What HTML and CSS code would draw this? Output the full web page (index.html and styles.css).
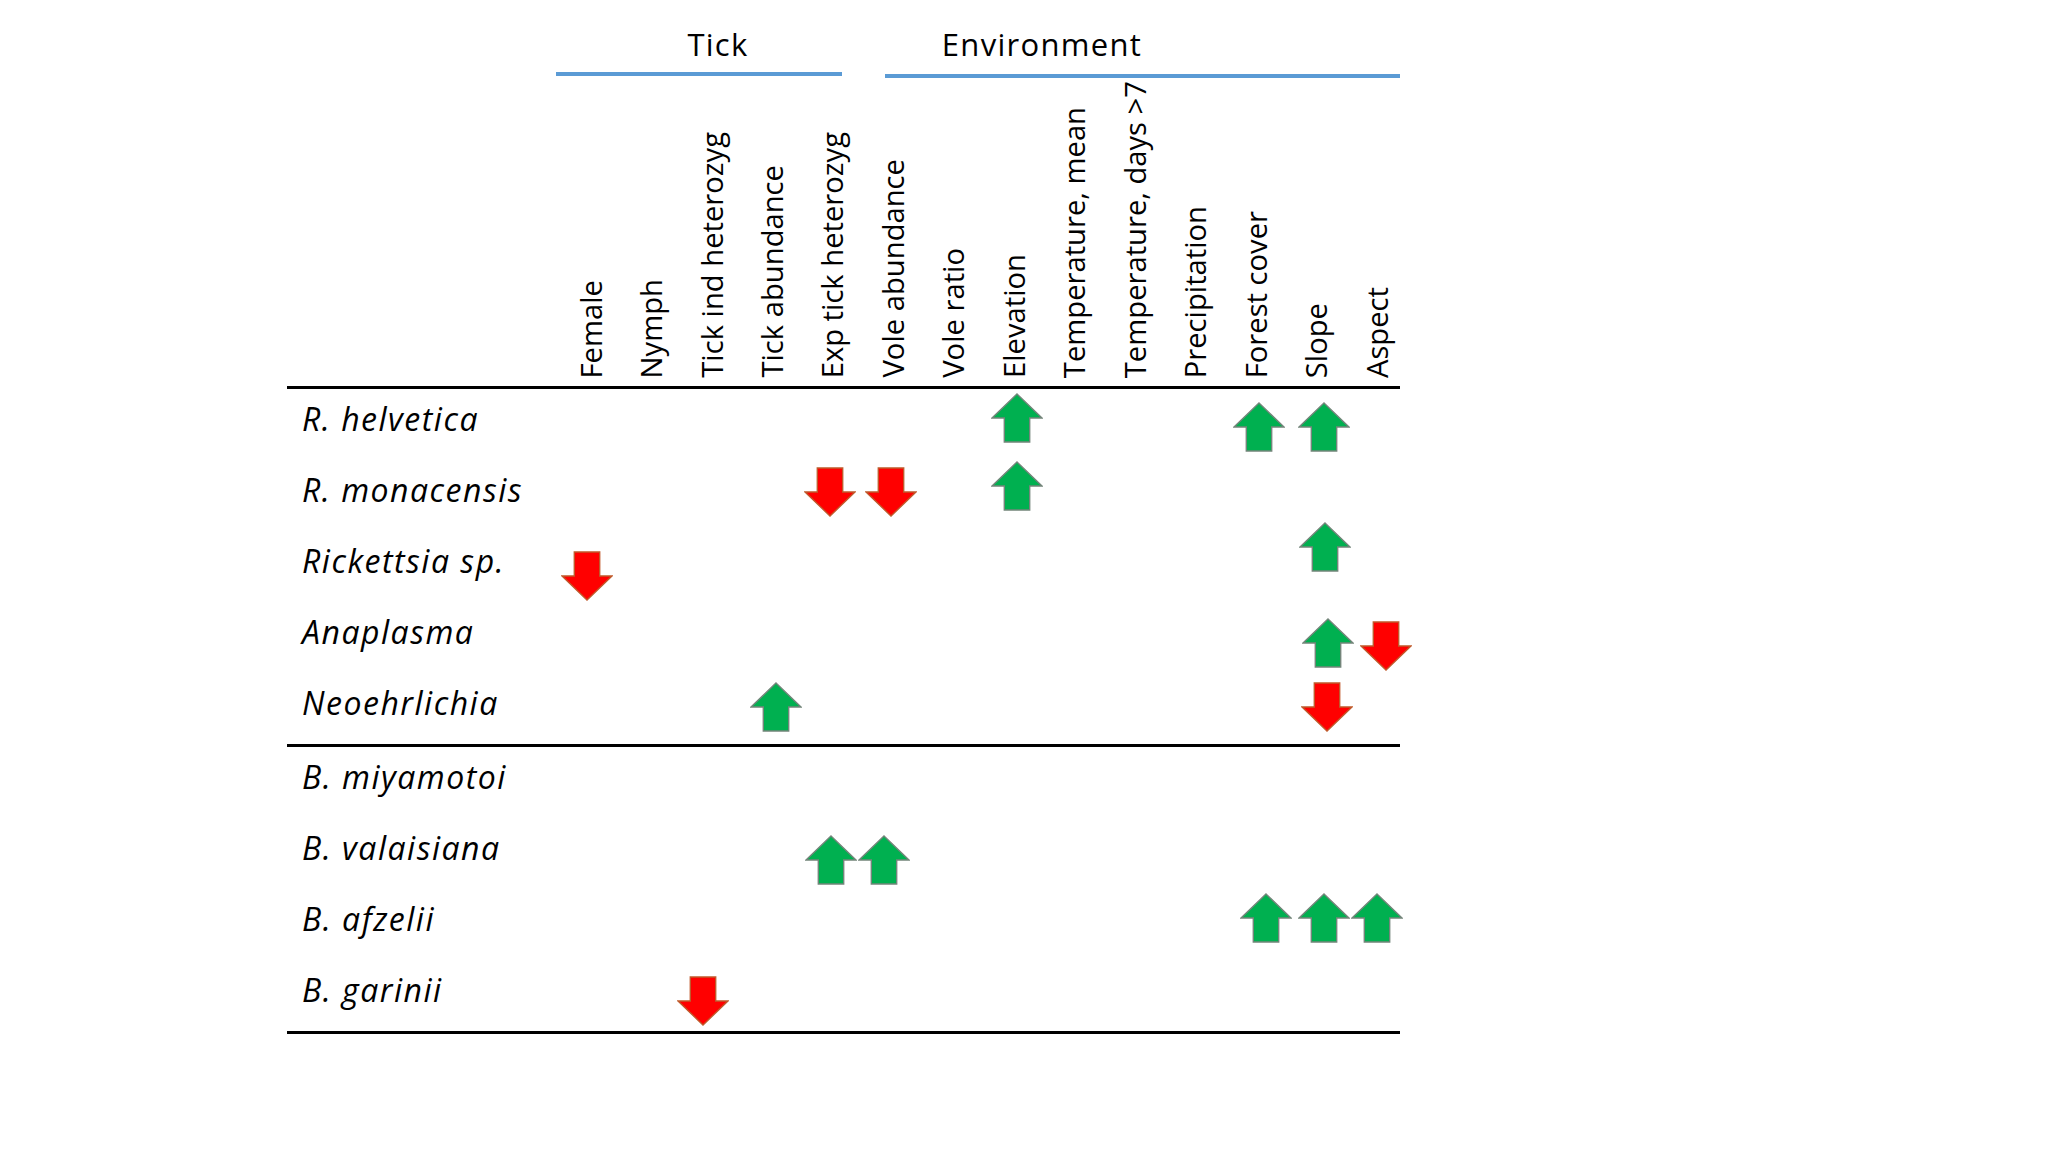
FILE: index.html
```html
<!DOCTYPE html>
<html lang="en">
<head>
<meta charset="utf-8">
<title>Tick and environment associations</title>
<link rel="stylesheet" href="styles.css">
</head>
<body>
<svg class="defs" width="0" height="0" aria-hidden="true">
  <defs>
    <symbol id="arrow-up" viewBox="0 0 52 50">
      <polygon points="26,1 51,25 38.7,25 38.7,49 13.3,49 13.3,25 1,25"/>
    </symbol>
    <symbol id="arrow-down" viewBox="0 0 52 50">
      <polygon points="13.3,1 38.7,1 38.7,25 51,25 26,49 1,25 13.3,25"/>
    </symbol>
  </defs>
</svg>
<div class="slide">
  <div class="table">
    <div class="groups">
      <div class="group group-tick">
        <div class="group-title">Tick</div>
        <div class="group-rule"></div>
      </div>
      <div class="group group-env">
        <div class="group-title">Environment</div>
        <div class="group-rule"></div>
      </div>
    </div>

    <div class="heads">
      <div class="head-spacer"></div>
      <div class="head"><span>Female</span></div>
      <div class="head"><span>Nymph</span></div>
      <div class="head"><span>Tick ind heterozyg</span></div>
      <div class="head"><span>Tick abundance</span></div>
      <div class="head"><span>Exp tick heterozyg</span></div>
      <div class="head"><span>Vole abundance</span></div>
      <div class="head"><span>Vole ratio</span></div>
      <div class="head"><span>Elevation</span></div>
      <div class="head"><span>Temperature, mean</span></div>
      <div class="head"><span>Temperature, days &gt;7</span></div>
      <div class="head"><span>Precipitation</span></div>
      <div class="head"><span>Forest cover</span></div>
      <div class="head"><span>Slope</span></div>
      <div class="head"><span>Aspect</span></div>
    </div>

    <div class="section">
      <div class="row">
        <div class="label">R. helvetica</div>
        <svg class="arrow up" style="grid-column:9; --dx:3px; --dy:-5px"><use href="#arrow-up"/></svg>
        <svg class="arrow up" style="grid-column:13; --dx:3px; --dy:4px"><use href="#arrow-up"/></svg>
        <svg class="arrow up" style="grid-column:14; --dx:7px; --dy:4px"><use href="#arrow-up"/></svg>
      </div>
      <div class="row">
        <div class="label">R. monacensis</div>
        <svg class="arrow down" style="grid-column:6; --dx:-3px; --dy:-2px"><use href="#arrow-down"/></svg>
        <svg class="arrow down" style="grid-column:7; --dx:-2px; --dy:-2px"><use href="#arrow-down"/></svg>
        <svg class="arrow up" style="grid-column:9; --dx:3px; --dy:-8px"><use href="#arrow-up"/></svg>
      </div>
      <div class="row">
        <div class="label">Rickettsia sp.</div>
        <svg class="arrow down" style="grid-column:2; --dx:-4px; --dy:11px"><use href="#arrow-down"/></svg>
        <svg class="arrow up" style="grid-column:14; --dx:8px; --dy:-18px"><use href="#arrow-up"/></svg>
      </div>
      <div class="row">
        <div class="label">Anaplasma</div>
        <svg class="arrow up" style="grid-column:14; --dx:11px; --dy:7px"><use href="#arrow-up"/></svg>
        <svg class="arrow down" style="grid-column:15; --dx:9px; --dy:10px"><use href="#arrow-down"/></svg>
      </div>
      <div class="row">
        <div class="label">Neoehrlichia</div>
        <svg class="arrow up" style="grid-column:5; --dx:3px; --dy:0px"><use href="#arrow-up"/></svg>
        <svg class="arrow down" style="grid-column:14; --dx:10px; --dy:0px"><use href="#arrow-down"/></svg>
      </div>
    </div>

    <div class="section section-last">
      <div class="row">
        <div class="label">B. miyamotoi</div>
      </div>
      <div class="row">
        <div class="label">B. valaisiana</div>
        <svg class="arrow up" style="grid-column:6; --dx:-2px; --dy:8px"><use href="#arrow-up"/></svg>
        <svg class="arrow up" style="grid-column:7; --dx:-9px; --dy:8px"><use href="#arrow-up"/></svg>
      </div>
      <div class="row">
        <div class="label">B. afzelii</div>
        <svg class="arrow up" style="grid-column:13; --dx:10px; --dy:-5px"><use href="#arrow-up"/></svg>
        <svg class="arrow up" style="grid-column:14; --dx:7px; --dy:-5px"><use href="#arrow-up"/></svg>
        <svg class="arrow up" style="grid-column:15; --dx:0px; --dy:-5px"><use href="#arrow-up"/></svg>
      </div>
      <div class="row">
        <div class="label">B. garinii</div>
        <svg class="arrow down" style="grid-column:4; --dx:-9px; --dy:7px"><use href="#arrow-down"/></svg>
      </div>
    </div>
  </div>
</div>
</body>
</html>
```

FILE: styles.css
```css
html, body {
  margin: 0;
  padding: 0;
  background: #ffffff;
}

.defs {
  position: absolute;
  width: 0;
  height: 0;
  overflow: hidden;
}

.slide {
  width: 2048px;
  height: 1152px;
  box-sizing: border-box;
  padding: 24px 0 0 287px;
  font-family: "Open Sans", "DejaVu Sans", sans-serif;
  color: #000;
  background: #ffffff;
}

.table {
  width: 1113px;
}

/* group headers */
.groups {
  display: flex;
  align-items: flex-start;
  height: 54px;
  margin-left: 269px;
}

.group-tick {
  width: 286px;
}

.group-env {
  width: 515px;
  margin-left: 43px;
}

.group-title {
  font-size: 31px;
  line-height: 40px;
  letter-spacing: 1.3px;
  text-align: center;
  white-space: nowrap;
}

.group-tick .group-title {
  padding-left: 38px;
}

.group-env .group-title {
  padding-right: 201px;
}

.group-rule {
  height: 4px;
  background: #5b9bd5;
}

.group-tick .group-rule {
  margin-top: 8px;
}

.group-env .group-rule {
  margin-top: 10px;
}

/* column headers */
.heads {
  display: grid;
  grid-template-columns: 274px repeat(14, 60.46px);
  height: 308px;
}

.head {
  display: flex;
  justify-content: center;
  align-items: flex-end;
  padding-bottom: 8px;
}

.head span {
  writing-mode: vertical-rl;
  transform: rotate(180deg);
  font-size: 29.2px;
  line-height: 1;
  white-space: nowrap;
}

/* body */
.section {
  border-top: 3px solid #000;
}

.section-last {
  border-bottom: 3px solid #000;
}

.row {
  display: grid;
  grid-template-columns: 274px repeat(14, 60.46px);
  height: 71px;
}

.label {
  grid-row: 1;
  grid-column: 1;
  font-style: italic;
  font-size: 32px;
  line-height: 40px;
  letter-spacing: 1.5px;
  padding: 10px 0 0 15px;
  white-space: nowrap;
}

.arrow {
  grid-row: 1;
  width: 52px;
  height: 50px;
  justify-self: center;
  align-self: start;
  margin-top: 9px;
  overflow: visible;
  transform: translate(var(--dx, 0px), var(--dy, 0px));
}

.arrow.up {
  fill: #00b050;
  stroke: #73857a;
  stroke-width: 1.4;
}

.arrow.down {
  fill: #ff0000;
  stroke: #c0592b;
  stroke-width: 1.4;
}
```
